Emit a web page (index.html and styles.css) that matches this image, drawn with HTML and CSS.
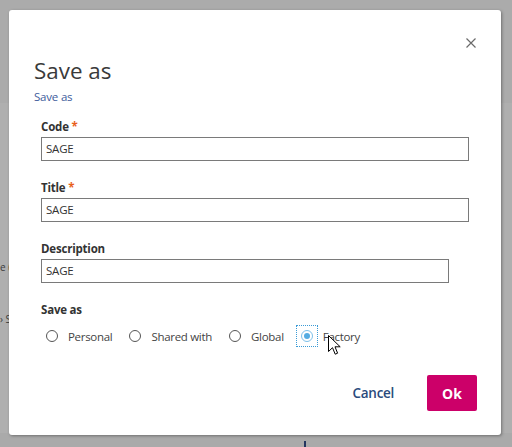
FILE: index.html
```html
<!DOCTYPE html>
<html lang="en">
<head>
<meta charset="utf-8">
<title>Save as</title>
<link rel="stylesheet" href="styles.css">
</head>
<body>
<div class="page">
  <div class="page-top"></div>
  <div class="page-body">
    <div class="frag-col">
      <div class="frag frag-1">e (</div>
      <div class="frag frag-2">› S</div>
    </div>
  </div>
  <div class="page-foot"><span class="foot-mark"></span></div>
</div>

<div class="dialog" role="dialog" aria-labelledby="dlg-title">
  <div class="dlg-head">
    <div class="dlg-titles">
      <h1 id="dlg-title" class="dlg-title">Save as</h1>
      <a class="dlg-sub" href="#">Save as</a>
    </div>
    <button class="dlg-close" aria-label="Close">
      <svg width="10" height="10" viewBox="0 0 10 10"><path d="M0.5 0.5 L9.5 9.5 M9.5 0.5 L0.5 9.5" stroke="#6a6a6a" stroke-width="1.2" fill="none"/></svg>
    </button>
  </div>

  <div class="form">
    <div class="field">
      <label class="lbl">Code <span class="req">*</span></label>
      <div class="inp">SAGE</div>
    </div>
    <div class="field">
      <label class="lbl">Title <span class="req">*</span></label>
      <div class="inp">SAGE</div>
    </div>
    <div class="field">
      <label class="lbl">Description</label>
      <div class="inp inp-short">SAGE</div>
    </div>
    <div class="field">
      <label class="lbl">Save as</label>
      <div class="radios">
        <div class="radio"><span class="rwrap"><span class="rc"></span></span><span class="rt">Personal</span></div>
        <div class="radio"><span class="rwrap"><span class="rc"></span></span><span class="rt">Shared with</span></div>
        <div class="radio"><span class="rwrap"><span class="rc"></span></span><span class="rt">Global</span></div>
        <div class="radio on"><span class="rwrap focus"><span class="rc"></span></span><span class="rt">Factory</span></div>
      </div>
    </div>
  </div>

  <div class="actions">
    <button class="btn-cancel">Cancel</button>
    <button class="btn-ok">Ok</button>
  </div>

  <svg class="cursor" width="14" height="22" viewBox="0 0 14 22">
    <path d="M0.5 0.5 L0.5 16.5 L4.5 12.7 L7.2 19.2 L9.6 18.2 L7 11.8 L12.2 11.8 Z" fill="#fff" stroke="#000" stroke-width="1" stroke-linejoin="miter"/>
  </svg>
</div>
</body>
</html>
```

FILE: styles.css
```css
html, body {
  margin: 0;
  padding: 0;
}
body {
  width: 512px;
  height: 447px;
  overflow: hidden;
  background: #afafaf;
  font-family: "Open Sans", "Noto Sans", sans-serif;
  position: relative;
}
.page {
  display: flex;
  flex-direction: column;
  height: 447px;
}
.page-top {
  height: 103px;
  background: #ababab;
}
.page-body {
  flex: 1;
  display: flex;
}
.frag-col {
  display: flex;
  flex-direction: column;
  padding-top: 158px;
}
.frag {
  white-space: nowrap;
  font-size: 10px;
  line-height: 12px;
  color: #3c3c3c;
}
.frag-2 {
  margin-top: 40px;
}
.page-foot {
  height: 14px;
  position: relative;
  background: #aaaaaa;
}
.foot-mark {
  position: absolute;
  left: 304px;
  top: 8px;
  width: 2px;
  height: 6px;
  background: #23355f;
}

.dialog {
  position: absolute;
  left: 9px;
  top: 10px;
  width: 492px;
  height: 425px;
  box-sizing: border-box;
  background: #fff;
  border-radius: 3px;
  box-shadow: 1px 1px 3px rgba(0,0,0,0.35);
  padding: 28px 24px 24px 25px;
  display: flex;
  flex-direction: column;
}
.dlg-head {
  display: flex;
  justify-content: space-between;
  align-items: flex-start;
}
.dlg-titles {
  display: flex;
  flex-direction: column;
  padding-top: 19px;
}
.dlg-title {
  margin: 0;
  font-weight: 400;
  font-size: 22.4px;
  line-height: 28px;
  color: #3a3a3a;
}
.dlg-sub {
  font-size: 11.5px;
  line-height: 16px;
  color: #3e5b9c;
  text-decoration: none;
  margin-top: 4px;
  letter-spacing: -0.2px;
}
.dlg-close {
  border: 0;
  background: none;
  padding: 0;
  margin-right: 1px;
  width: 10px;
  height: 10px;
  display: flex;
}

.form {
  display: flex;
  flex-direction: column;
  padding-left: 7px;
  margin-top: 14px;
}
.field {
  display: flex;
  flex-direction: column;
  margin-bottom: 19px;
}
.lbl {
  font-size: 11.5px;
  line-height: 16px;
  font-weight: 700;
  color: #333;
  margin-bottom: 2px;
  letter-spacing: -0.2px;
}
.req {
  color: #e8601c;
}
.inp {
  box-sizing: border-box;
  width: 428px;
  height: 24px;
  border: 1px solid #7a7a7a;
  padding: 0 4px;
  font-size: 11.5px;
  line-height: 22px;
  color: #333;
  letter-spacing: -0.2px;
}
.inp-short {
  width: 408px;
}
.radios {
  display: flex;
  gap: 12px;
  margin-top: 5px;
}
.radio {
  display: flex;
  align-items: center;
  gap: 5px;
  font-size: 11.5px;
  color: #444;
  letter-spacing: -0.3px;
}
.rwrap {
  display: flex;
  padding: 4px;
  border: 1px dotted transparent;
}
.rwrap.focus {
  border-color: #3b9bd6;
}
.rc {
  width: 12px;
  height: 12px;
  box-sizing: border-box;
  border: 1px solid #555;
  border-radius: 50%;
  background: #fff;
  display: flex;
  align-items: center;
  justify-content: center;
}
.radio.on .rc {
  border-color: #7cc0ea;
}
.radio.on .rc::after {
  content: "";
  width: 6px;
  height: 6px;
  border-radius: 50%;
  background: #55ace2;
}

.actions {
  margin-top: auto;
  display: flex;
  justify-content: flex-end;
  align-items: center;
  gap: 33px;
}
.btn-cancel {
  border: 0;
  background: none;
  padding: 0;
  font-family: inherit;
  font-size: 13.5px;
  font-weight: 600;
  color: #294a7c;
  letter-spacing: -0.3px;
}
.btn-ok {
  border: 0;
  width: 50px;
  height: 36px;
  border-radius: 2px;
  background: #cc0069;
  color: #fff;
  font-family: inherit;
  font-size: 14px;
  font-weight: 700;
  padding: 0;
}
.cursor {
  position: absolute;
  left: 319px;
  top: 325px;
}
```
